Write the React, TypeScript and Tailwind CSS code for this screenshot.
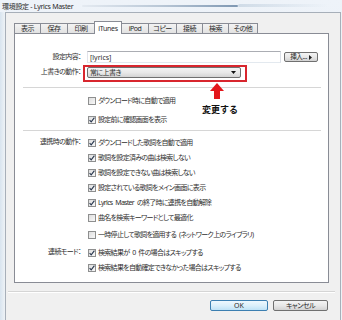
import React from "react";

const FONT = "font-['Noto_Sans','Noto_Sans_CJK_JP',sans-serif] [font-feature-settings:'palt']";

function Check({ checked }: { checked: boolean }) {
  return (
    <span className="w-[8px] h-[8px] shrink-0 border border-[#8e8f8f] bg-gradient-to-br from-[#dedede] to-[#f8f8f8] flex items-center justify-center">
      {checked && (
        <svg width="6" height="6" viewBox="0 0 6 6">
          <path d="M0.6 3.1 L2.2 4.9 L5.4 0.6" stroke="#27364d" strokeWidth="1.1" fill="none" />
        </svg>
      )}
    </span>
  );
}

function Row({ label, checked, text, cls }: { label?: string; checked: boolean; text: string; cls: string }) {
  return (
    <div className={"flex items-center h-[15px] " + cls}>
      <div className="w-[66px] text-right text-[7px] tracking-[-0.6px] text-[#2e2e2e] whitespace-nowrap">{label ?? ""}</div>
      <div className="ml-[7px] flex items-center">
        <Check checked={checked} />
        <span className="ml-[2px] text-[7px] tracking-[-0.7px] text-[#2e2e2e] whitespace-nowrap leading-none">{text}</span>
      </div>
    </div>
  );
}

const tabs: { t: string; w: string; sel?: boolean; noL?: boolean; last?: boolean }[] = [
  { t: "表示", w: "w-[26px]" },
  { t: "保存", w: "w-[27px]" },
  { t: "印刷", w: "w-[27px]" },
  { t: "iTunes", w: "w-[28px]", sel: true },
  { t: "iPod", w: "w-[26px]", noL: true },
  { t: "コピー", w: "w-[28px]" },
  { t: "接続", w: "w-[26px]" },
  { t: "検索", w: "w-[26px]" },
  { t: "その他", w: "w-[30px]", last: true },
];

export default function App() {
  return (
    <div className={"w-[342px] h-[320px] overflow-hidden bg-gradient-to-b from-[#eef3f9] to-[#dfe8f1] relative " + FONT}>
      {/* title bar */}
      <div className="h-[12px] relative flex items-center pl-[2px]">
        <span className="text-[7px] tracking-[-0.3px] text-[#2a2a2a] leading-none whitespace-nowrap">環境設定 - Lyrics Master</span>
        <div className="absolute left-[82px] top-[5px] w-[156px] h-[2px] bg-gradient-to-r from-[#e4eaf1] via-[#b9c7d6] to-[#7f98b3] rounded-full" />
        <div className="absolute left-[238px] top-[4px] w-[90px] h-[3px] bg-gradient-to-r from-[#cfdbe7] to-transparent rounded-full" />
      </div>
      <div className="flex">
        <div className="w-[5px] h-[308px] bg-gradient-to-r from-[#d8e4ef] to-[#eef2f6]" />
        <div className="w-[336px] h-[308px] bg-[#f0f0f0] border-l border-t border-r border-[#a7afb9] flex flex-col">
          {/* tabs */}
          <div className="ml-[8px] mt-[8px] h-[12px] flex items-end relative z-10">
            {tabs.map((tb) =>
              tb.sel ? (
                <div
                  key={tb.t}
                  className={tb.w + " h-[13px] -mb-px bg-white border-l border-t border-r border-[#898c95] flex items-center justify-center text-[7px] tracking-[-0.3px] text-[#2a2a2a] leading-none"}
                >
                  {tb.t}
                </div>
              ) : (
                <div
                  key={tb.t}
                  className={
                    tb.w +
                    " h-[10px] border-t border-[#898c95] bg-gradient-to-b from-[#f3f3f3] to-[#e2e2e2] flex items-center justify-center text-[7px] tracking-[-0.5px] text-[#2a2a2a] leading-none " +
                    (tb.noL ? "" : "border-l ") +
                    (tb.last ? "border-r" : "")
                  }
                >
                  {tb.t}
                </div>
              )
            )}
          </div>
          {/* panel */}
          <div className="ml-[8px] w-[315px] h-[250px] bg-white border border-[#898c95] relative flex flex-col">
            <div className="mt-[17px] flex items-center h-[12px]">
              <div className="w-[66px] text-right text-[7px] tracking-[-0.6px] text-[#2e2e2e] whitespace-nowrap">設定内容：</div>
              <div className="ml-[6px] w-[194px] h-[12px] border border-[#abadb3] border-l-[#e2e3ea] border-r-[#dbdfe6] border-b-[#e3e9ef] bg-white flex items-center pl-[2px] text-[7px] text-[#2e2e2e] leading-none">
                [lyrics]
              </div>
              <div className="ml-[3px] w-[34px] h-[10px] border border-[#707070] rounded-[2px] bg-gradient-to-b from-[#f4f4f4] via-[#e8e8e8] to-[#d2d2d2] flex items-center justify-center gap-[2px] text-[6.5px] tracking-[-0.3px] text-[#2a2a2a] leading-none">
                <span>挿入...</span>
                <svg width="3" height="5" viewBox="0 0 3 5">
                  <path d="M0 0 L3 2.5 L0 5 Z" fill="#222" />
                </svg>
              </div>
            </div>
            <div className="mt-[4px] flex items-center h-[11px]">
              <div className="w-[66px] text-right text-[7px] tracking-[-0.6px] text-[#2e2e2e] whitespace-nowrap">上書きの動作：</div>
              <div className="ml-[6px] w-[154px] h-[11px] relative border border-[#707070] rounded-[2px] bg-gradient-to-b from-[#f3f3f3] via-[#e9e9e9] to-[#d4d4d4] flex items-center justify-between pl-[2px] pr-[4px] text-[7px] tracking-[-0.6px] text-[#2e2e2e] leading-none">
                <span>常に上書き</span>
                <svg width="5" height="3" viewBox="0 0 5 3">
                  <path d="M0 0 L5 0 L2.5 3 Z" fill="#111" />
                </svg>
                <div className="absolute -left-[5px] -top-[3px] -right-[7px] -bottom-[5px] border-2 border-[#d8262e]" />
              </div>
            </div>
            <div className="mt-[9px] ml-[8px] w-[298px] h-px bg-[#d6d6d6]" />
            <Row checked={false} text="ダウンロード時に自動で適用" cls="mt-[5px]" />
            <Row checked={true} text="設定前に確認画面を表示" cls="mt-[4px]" />
            <div className="mt-[3px] ml-[8px] w-[298px] h-px bg-[#d6d6d6]" />
            <Row label="連携時の動作：" checked={true} text="ダウンロードした歌詞を自動で適用" cls="mt-[4px]" />
            <Row checked={true} text="歌詞を設定済みの曲は検索しない" cls="" />
            <Row checked={true} text="歌詞を設定できない曲は検索しない" cls="" />
            <Row checked={true} text="設定されている歌詞をメイン画面に表示" cls="" />
            <Row checked={true} text={"Lyrics\u2002Master\u2002の終了時に連携を自動解除"} cls="" />
            <Row checked={false} text="曲名を検索キーワードとして最適化" cls="" />
            <Row checked={false} text={"一時停止して歌詞を適用する\u2002(ネットワーク上のライブラリ)"} cls="mt-[2px]" />
            <Row label="連続モード：" checked={true} text={"検索結果が\u20020\u2002件の場合はスキップする"} cls="mt-[3px]" />
            <Row checked={true} text="検索結果を自動確定できなかった場合はスキップする" cls="" />

            {/* annotation arrow */}
            <svg className="absolute left-[195px] top-[49px]" width="14" height="16" viewBox="0 0 14 16">
              <path d="M7 0 L14 8 L10 8 L10 16 L4 16 L4 8 L0 8 Z" fill="#e3161b" />
            </svg>
            <div className="absolute left-[187px] top-[70px] text-[9px] font-bold text-[#111] leading-[11px] whitespace-nowrap [font-feature-settings:normal]">
              変更する
            </div>
          </div>
          {/* separator */}
          <div className="mt-[8px] ml-[2px] w-[327px] h-px bg-[#d5d5d5]" />
          <div className="ml-[2px] w-[327px] h-px bg-white" />
          {/* buttons */}
          <div className="mt-[7px] flex">
            <div className="ml-[204px] w-[58px] h-[11px] border border-[#3c7fb1] rounded-[2px] bg-gradient-to-b from-[#eef8fe] via-[#dcf0fb] to-[#bfe2f6] flex items-center justify-center text-[7px] text-[#2a2a2a] leading-none">
              OK
            </div>
            <div className="ml-[5px] w-[55px] h-[11px] border border-[#707070] rounded-[2px] bg-gradient-to-b from-[#f4f4f4] via-[#e8e8e8] to-[#d2d2d2] flex items-center justify-center text-[7px] tracking-[-0.5px] text-[#2a2a2a] leading-none">
              キャンセル
            </div>
          </div>
        </div>
        <div className="w-px h-[308px] bg-[#eef2f6]" />
      </div>
    </div>
  );
}
